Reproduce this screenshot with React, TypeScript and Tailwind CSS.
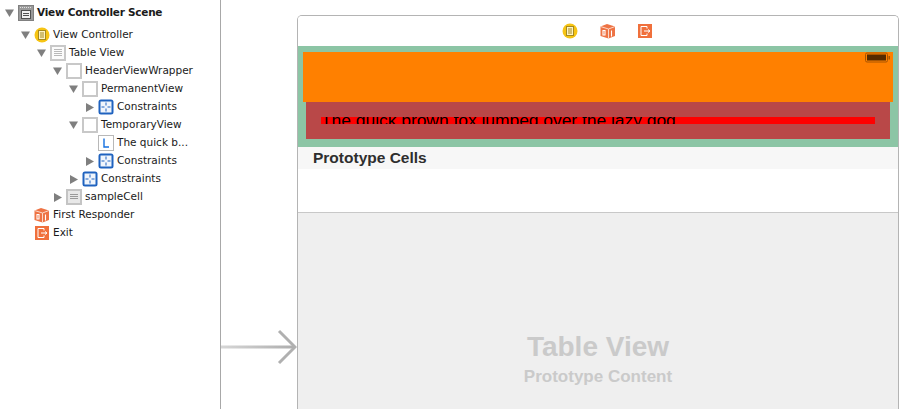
import React from "react";

type IconKind = "scene" | "controller" | "table" | "view" | "constraints" | "label" | "cell" | "responder" | "exit";

interface TreeRow {
  depth: number;
  icon: IconKind;
  label: string;
  open?: boolean;
}

const rows: TreeRow[] = [
  { depth: 1, icon: "controller", label: "View Controller", open: true },
  { depth: 2, icon: "table", label: "Table View", open: true },
  { depth: 3, icon: "view", label: "HeaderViewWrapper", open: true },
  { depth: 4, icon: "view", label: "PermanentView", open: true },
  { depth: 5, icon: "constraints", label: "Constraints", open: false },
  { depth: 4, icon: "view", label: "TemporaryView", open: true },
  { depth: 5, icon: "label", label: "The quick b..." },
  { depth: 5, icon: "constraints", label: "Constraints", open: false },
  { depth: 4, icon: "constraints", label: "Constraints", open: false },
  { depth: 3, icon: "cell", label: "sampleCell", open: false },
  { depth: 1, icon: "responder", label: "First Responder" },
  { depth: 1, icon: "exit", label: "Exit" },
];

const Icon = ({ kind }: { kind: IconKind }) => {
  switch (kind) {
    case "scene":
      return (
        <svg width="16" height="16" viewBox="0 0 16 16">
          <rect x="0.5" y="0.5" width="15" height="15" fill="#9a9a9a" stroke="#808080" />
          <path d="M2 2.5h12" stroke="#e2e2e2" strokeDasharray="1 1" />
          <rect x="3.5" y="5.5" width="9" height="8" fill="#f0f0f0" stroke="#505050" />
          <path d="M5 8.5h6M5 10.5h6" stroke="#505050" />
        </svg>
      );
    case "controller":
      return (
        <svg width="16" height="16" viewBox="0 0 16 16">
          <circle cx="8" cy="8" r="7.5" fill="#f6c414" />
          <rect x="4.5" y="3.5" width="7" height="9" fill="#fdf3c4" stroke="#a68a1e" />
          <path d="M6 6h4M6 8h4M6 10h4" stroke="#a68a1e" />
        </svg>
      );
    case "table":
      return (
        <svg width="16" height="16" viewBox="0 0 16 16">
          <rect x="1" y="1" width="14" height="14" fill="#fbfbfb" stroke="#c8c8c8" strokeWidth="2" />
          <path d="M4 4.5h8M4 6.5h8M4 8.5h8M4 10.5h8" stroke="#b8b8b8" />
        </svg>
      );
    case "view":
      return (
        <svg width="16" height="16" viewBox="0 0 16 16">
          <rect x="1" y="1" width="14" height="14" fill="#ffffff" stroke="#c8c8c8" strokeWidth="2" />
        </svg>
      );
    case "cell":
      return (
        <svg width="16" height="16" viewBox="0 0 16 16">
          <rect x="1" y="1" width="14" height="14" fill="#e8e8e8" stroke="#c4c4c4" strokeWidth="2" />
          <path d="M4 5.5h8M4 7.5h8M4 9.5h8" stroke="#9a9a9a" />
        </svg>
      );
    case "constraints":
      return (
        <svg width="16" height="16" viewBox="0 0 16 16">
          <rect x="0.5" y="0.5" width="15" height="15" rx="2.5" fill="#1f62bf" />
          <rect x="2.5" y="2.5" width="11" height="11" fill="#f0f5fc" />
          <path d="M8 3.5v3M8 9.5v3M3.5 8h3M9.5 8h3" stroke="#1f62bf" />
        </svg>
      );
    case "label":
      return (
        <svg width="16" height="16" viewBox="0 0 16 16">
          <rect x="0.5" y="0.5" width="15" height="15" fill="#ffffff" stroke="#b8b8b8" />
          <path d="M6 3.5v8.5h5" fill="none" stroke="#1570e0" strokeWidth="1.4" />
        </svg>
      );
    case "responder":
      return (
        <svg width="16" height="16" viewBox="0 0 16 16">
          <path d="M0.5 3.5L7 1l8 2.5v9.5L8.5 15.5 0.5 13z" fill="#ee7344" />
          <path d="M0.5 3.5L8.5 6l6.5-2.5M8.5 6v9.5" stroke="#fbd8c8" fill="none" />
          <path d="M3 7.5h2v4.5h-2zM11.5 7.5v6" stroke="#fff" strokeWidth="1.1" fill="none" />
        </svg>
      );
    case "exit":
      return (
        <svg width="14" height="14" viewBox="0 0 14 14">
          <rect width="14" height="14" fill="#f0703c" />
          <path d="M9 4.5V2.5H3v9h6V9.5" fill="none" stroke="#fff" />
          <path d="M6 7h5.5M10 5.5L12 7l-2 1.5" fill="none" stroke="#fff" />
        </svg>
      );
  }
};

const Disclosure = ({ open }: { open?: boolean }) => {
  if (open === undefined) return <span className="w-[9px] shrink-0" />;
  return open ? (
    <svg width="9" height="8" viewBox="0 0 9 8" className="shrink-0">
      <path d="M0 0.5h9L4.5 8z" fill="#7f7f7f" />
    </svg>
  ) : (
    <svg width="9" height="9" viewBox="0 0 9 9" className="shrink-0">
      <path d="M1 0l8 4.5L1 9z" fill="#7f7f7f" />
    </svg>
  );
};

const Row = ({ row }: { row: TreeRow }) => {
  return (
    <div className="flex h-[18px] items-center whitespace-nowrap text-[10.5px] text-[#1a1a1a]">
      {/* indent is the only computed value here */}
      <span className="shrink-0" style={{ width: 5 + row.depth * 16 }} />
      <Disclosure open={row.open} />
      <span className="ml-[4px] flex w-[16px] shrink-0 items-center justify-center">
        <Icon kind={row.icon} />
      </span>
      <span className="ml-[3px]">{row.label}</span>
    </div>
  );
};

const BatteryIcon = () => (
  <svg width="25" height="11" viewBox="0 0 25 11" className="absolute right-[3px] top-[0px]">
    <rect x="0.5" y="1" width="22" height="9" rx="1.5" fill="none" stroke="#a85400" />
    <rect x="2" y="2.5" width="19" height="6" fill="#552a00" />
    <rect x="23.5" y="4" width="1.5" height="3.5" fill="#a85400" />
  </svg>
);

const EntryArrow = () => (
  <svg width="76" height="36" viewBox="0 0 76 36" className="mt-[329px] shrink-0">
    <defs>
      <linearGradient id="shaft" x1="0" x2="1" y1="0" y2="0">
        <stop offset="0" stopColor="#d6d6d6" />
        <stop offset="1" stopColor="#aeaeae" />
      </linearGradient>
    </defs>
    <rect x="0" y="16.5" width="73" height="3" fill="url(#shaft)" />
    <path d="M58 2L74 18L58 34" fill="none" stroke="#b0b0b0" strokeWidth="3" />
  </svg>
);

export default function App() {
  return (
    <div
      className="flex h-[409px] w-[917px] overflow-hidden bg-white"
      style={{ fontFamily: '"DejaVu Sans", sans-serif' }}
    >
      {/* outline */}
      <div className="w-[221px] shrink-0 border-r border-[#a8a8a8] pt-[4px]">
        <div className="mb-[4px] flex h-[18px] items-center whitespace-nowrap text-[10.5px] font-bold tracking-[-0.25px] text-[#1a1a1a]">
          <span className="w-[5px] shrink-0" />
          <Disclosure open />
          <span className="ml-[4px] flex w-[16px] shrink-0 items-center justify-center">
            <Icon kind="scene" />
          </span>
          <span className="ml-[3px]">View Controller Scene</span>
        </div>
        {rows.map((row, i) => (
          <Row key={i} row={row} />
        ))}
      </div>

      <EntryArrow />

      {/* storyboard scene */}
      <div className="mt-[15px] flex h-[394px] w-[602px] shrink-0 flex-col overflow-hidden rounded-t-[5px] border-x border-t border-[#b4b4b4]">
        <div className="flex h-[30px] shrink-0 items-center justify-center gap-[22px] bg-white pl-[17px]">
          <Icon kind="controller" />
          <Icon kind="responder" />
          <Icon kind="exit" />
        </div>
        <div className="h-[101px] shrink-0 bg-[#8cc5a5] pt-[6px]">
          <div className="relative mx-[5px] h-[50px] bg-[#ff8000]">
            <BatteryIcon />
          </div>
          <div className="mx-[8px] h-[37px] bg-[#b94848] px-[15px] pt-[15px]">
            <div
              className="h-[7px] overflow-hidden bg-[#ff0000] text-[17.4px] leading-[6px] whitespace-nowrap text-black"
              style={{ fontFamily: '"Liberation Sans", sans-serif' }}
            >
              The quick brown fox jumped over the lazy dog.
            </div>
          </div>
        </div>
        <div
          className="flex h-[22px] shrink-0 items-center bg-[#f7f7f7] pl-[15px] text-[15.5px] font-bold text-[#2e2e2e]"
          style={{ fontFamily: '"Liberation Sans", sans-serif' }}
        >
          Prototype Cells
        </div>
        <div className="h-[44px] shrink-0 border-b border-[#c8c8c8] bg-white" />
        <div
          className="flex flex-1 flex-col items-center bg-[#efefef] pt-[116px] font-bold text-[#cacaca]"
          style={{ fontFamily: '"Liberation Sans", sans-serif' }}
        >
          <div className="text-[28px] leading-[36px]">Table View</div>
          <div className="text-[17px] leading-[23px]">Prototype Content</div>
        </div>
      </div>
    </div>
  );
}
